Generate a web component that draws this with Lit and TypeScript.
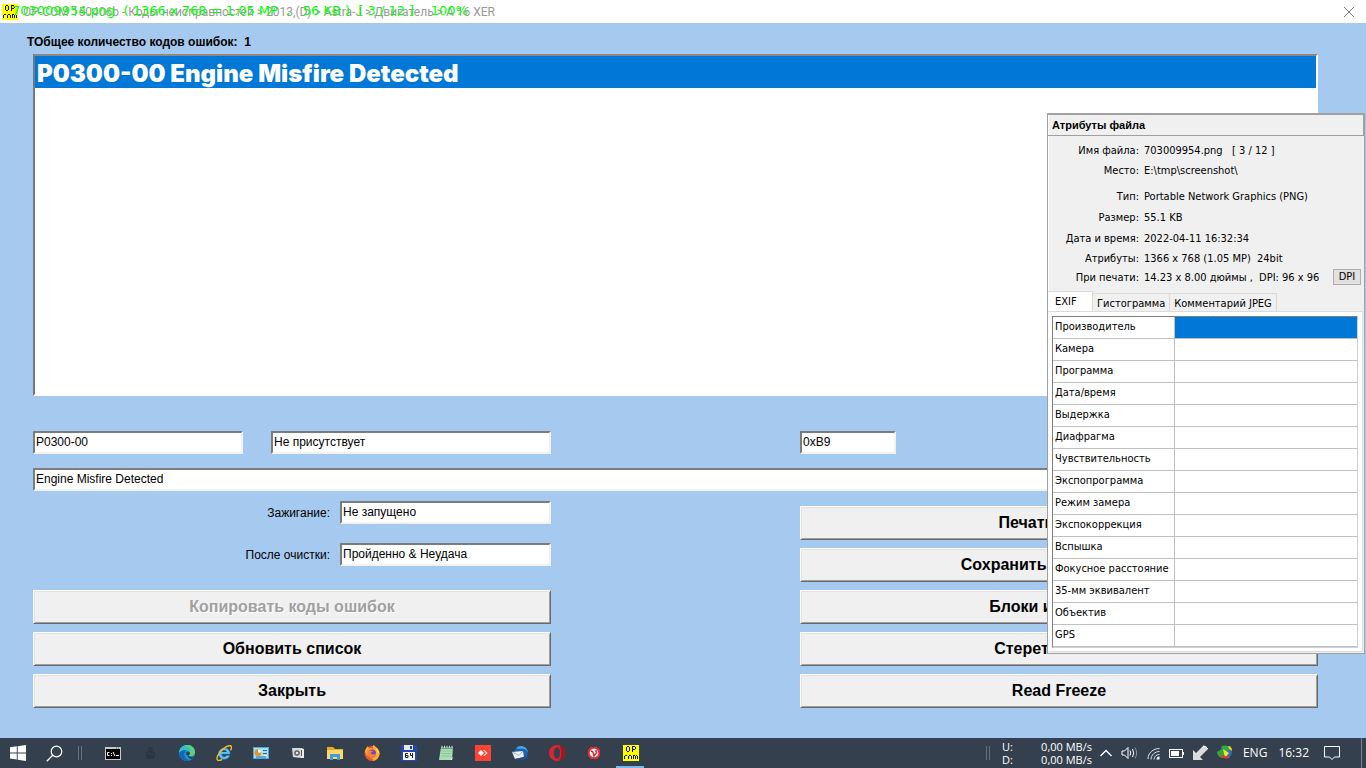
import { LitElement, html, svg, css } from "lit";
import { customElement } from "lit/decorators.js";

const EXIF_ROWS = [
  "Производитель", "Камера", "Программа", "Дата/время", "Выдержка", "Диафрагма",
  "Чувствительность", "Экспопрограмма", "Режим замера", "Экспокоррекция", "Вспышка",
  "Фокусное расстояние", "35-мм эквивалент", "Объектив", "GPS",
];

const INFO_GROUPS: { cls: string; rows: [string, string][] }[] = [
  { cls: "path", rows: [["Имя файла:", "703009954.png   [ 3 / 12 ]"], ["Место:", "E:\\tmp\\screenshot\\"]] },
  { cls: "kind", rows: [["Тип:", "Portable Network Graphics (PNG)"], ["Размер:", "55.1 KB"], ["Дата и время:", "2022-04-11 16:32:34"]] },
  { cls: "dims", rows: [["Атрибуты:", "1366 x 768 (1.05 MP)  24bit"], ["При печати:", "14.23 x 8.00 дюймы ,  DPI: 96 x 96"]] },
];

const opcom = svg`
  <rect width="16" height="16" fill="#ffff00"/>
  <g fill="none" stroke="#111" stroke-width="1">
    <path d="M3.500 2v4M6.500 2v4M4 1.500h2M4 6.500h2M9.500 1v6M10 1.500h2M12.500 2v2M10 4.500h2"/>
    <path d="M1.500 11v3M2 10.500h2M5.500 11v3M8.500 11v3M6 10.500h2M10.500 10v4M11 10.500h1M12.500 11v3M13 10.500h1M14.500 11v3"/>
  </g>`;

const APPS: { name: string; art: unknown; open?: boolean }[] = [
  { name: "Командная строка", art: svg`
    <rect x="0" y="2" width="16" height="13" fill="#c9c9c9"/><rect x="1" y="4" width="14" height="10" fill="#000"/>
    <path d="M11 3h1M13 3h1" stroke="#555"/>
    <path d="M4.500 7.500h-2v3h2M6.500 8v1M6.500 10v1M8 7l2 4M11 10.500h3" stroke="#fff" fill="none"/>` },
  { name: "Приложение", art: svg`
    <rect x="6" y="2" width="5" height="4" rx="2" fill="#2d3641"/><rect x="4" y="6" width="9" height="8" rx="3" fill="#2b343f"/><path d="M5 9h7" stroke="#38434f"/>` },
  { name: "Edge", art: svg`
    <circle cx="8" cy="8" r="8" fill="#1a8ed6"/>
    <path d="M0 8C0 3 4 0 8 0c5 0 8 3.500 8 7 0 2.500-2 4-4.500 4-2 0-2.500-1-2-2 .8-2-1-4-3.500-4C3 5 1 6.500 0 8z" fill="#35bfc0"/>
    <path d="M8 0c5 0 8 3.500 8 7 0 2.500-2 4-4.500 4-1.500 0-2.300-.6-2-1.500C13 7 12 2 5 .7 6 .2 7 0 8 0z" fill="#5fd07a"/>
    <path d="M5.500 8c-1 4 2 8 6.500 7C9 17 1 16 0 9c1-3 4-4.500 7-3.500C6 6 5.700 7 5.500 8z" fill="#1267b8"/>
    <circle cx="9" cy="8.500" r="2" fill="#34404e"/><path d="M9 10c1 2 4 2.500 6.300 1.200-.7 1.300-1.500 2.300-2.500 2.900C10 14 8.500 12 9 10z" fill="#34404e"/>` },
  { name: "Internet Explorer", art: svg`
    <path d="M14 9H5.500c.3 3.300 4 3.600 5 1.500h3.200C12 16 2.500 15.500 2.500 8.500c0-7 12-7.500 11.500.5z" fill="#5cc3f2" stroke="#2a8ccc" stroke-width=".5"/>
    <path d="M5.600 7h5.200c-.5-2.500-4.700-2.500-5.200 0z" fill="#34404e"/>
    <path d="M1.500 15C-1 12 7 2 13 .8c3-.5 3 2 1.500 4.500M1.500 15c1 1 3 .3 4.500-.7" fill="none" stroke="#f4b92a" stroke-width="1.400"/>` },
  { name: "Панель управления", art: svg`
    <rect x="0" y="2" width="16" height="12" fill="#4aa9dc"/><rect x="1" y="3" width="14" height="10" fill="#a6def5"/>
    <circle cx="5" cy="7.500" r="3" fill="#fff"/><path d="M5 7.500v-3.500a3.500 3.500 0 1 0 3.500 3.500z" fill="#e99324"/>
    <path d="M10 5.500h4M10 8.500h4M3 12h10" stroke="#1c6fae"/><path d="M11 10.500h3" stroke="#fff"/>` },
  { name: "Съёмка", art: svg`
    <path d="M2 3l9 0v10l-8-1z" fill="#d7d9da"/><path d="M11 3l3 1v9l-3 0z" fill="#eceded"/>
    <circle cx="7" cy="8" r="2.800" fill="#5b6165"/><circle cx="7" cy="8" r="1.300" fill="#e8e8e8"/><path d="M11.500 5v6" stroke="#555"/>` },
  { name: "Проводник", art: svg`
    <path d="M0 2h6l2 2h8v10H0z" fill="#e8ab25"/><path d="M0 5h16v9H0z" fill="#ffd76a"/><path d="M3 15V9h10v6h-3v-3H6v3z" fill="#3c9ee0"/>` },
  { name: "Firefox", art: svg`
    <circle cx="8" cy="8.500" r="7.500" fill="#f5542e"/><path d="M1 6C2 3 3 2 4 1l1 3c3-2 3 0 5 0C8 2 9 0 10 0c1 2 5 3 5.500 8 .3 4-3 8-7 8C12 13 3 14 1 6z" fill="#ffac2f"/>
    <circle cx="8" cy="8.500" r="4" fill="#7643c9"/><path d="M3.500 5c2 1 4-.5 5.500 1.500-1 .5-2 .5-2 1.500 1 2 3 2 5 .5 0 4-5 5-7.500 2.500C3 9.500 3 7 3.500 5z" fill="#ff8130"/><path d="M12 3c3 2 3.500 5 3 7-.5-2-1-2.500-2-3z" fill="#ffe14a"/>` },
  { name: "Total Commander", art: svg`
    <path d="M0 0h15l1 1v15H0z" fill="#2648ad"/><rect x="3" y="0" width="9" height="5" fill="#e5e9f2"/><rect x="9" y="1" width="2" height="3" fill="#24438f"/>
    <rect x="2" y="7" width="12" height="8" fill="#f5f5f5"/>
    <path d="M7 8.500H4.500v4H7v-2H5M9.500 8v2.500H12M11.500 8v5" fill="none" stroke="#222"/>` },
  { name: "Блокнот", art: svg`
    <path d="M3 2h12l-1 13H1z" fill="#a9dbb4"/><path d="M3 2h12v2H3z" fill="#6a9f78"/><path d="M3.500 6h10M3 8.500h10M3 11h10" stroke="#8fc79c"/><path d="M4 .8v2M6.500.8v2M9 .8v2M11.500.8v2M14 .8v2" stroke="#d8e6db"/><path d="M12 15l3-3-1 3z" fill="#f1fff2"/>` },
  { name: "AnyDesk", art: svg`
    <rect width="16" height="16" fill="#ff4236"/><path d="M3 8l3-3 3 3-3 3z" fill="#fff"/><path d="M8.500 5.500l1-.5 3 3-3 3-1-.5L11 8z" fill="#fff"/>` },
  { name: "Thunderbird", art: svg`
    <circle cx="9" cy="8" r="7" fill="#1c62b4"/><path d="M4 3C8-1 15 1 16 7c-2-3-5-4-9-3z" fill="#48a3e4"/>
    <path d="M0 7l11-1 1 6-9 2z" fill="#eff3f8"/><path d="M0 7l7 3.500 4-4.500" stroke="#9eb0c4" fill="none"/><path d="M3 14c4 2 9 1 11-4-2 2-5 3-11 4z" fill="#174a8c"/>` },
  { name: "Opera", art: svg`
    <circle cx="8" cy="8" r="8" fill="#e0222e"/><path d="M10 1c5 0 6 4 6 7s-1 7-6 7c3-3 3-11 0-14z" fill="#a5131c"/><ellipse cx="8" cy="8" rx="3.300" ry="5.800" fill="#34404e"/>` },
  { name: "Автоматизация", art: svg`
    <path d="M5 2h6l3 3v6l-3 3H5l-3-3V5z" fill="#e22f36"/><circle cx="8" cy="8" r="4.300" fill="#fff"/><path d="M5 6l2 1 1 4 3-4M9 6h2" stroke="#d52a31" stroke-width="1.500" fill="none"/>` },
  { name: "OP-COM", art: opcom, open: true },
];

@customElement("app-root")
export class AppRoot extends LitElement {
  static styles = css`
    :host { display: flex; flex-direction: column; height: 100vh; position: relative; overflow: hidden; background: #a6c9ef; color: #000; font: 12px/16px "Liberation Sans", Arial, sans-serif; }
    * { box-sizing: border-box; }
    button, input, select { font: inherit; color: inherit; margin: 0; border-radius: 0; }
    svg { display: block; flex: none; }

    .titlebar { flex: none; height: 23px; background: #fff; display: flex; align-items: center; justify-content: space-between; padding: 0 11px 0 2px; position: relative; }
    .caption { display: flex; align-items: center; gap: 5px; color: #999; font: 12px/16px Roboto, "Open Sans", sans-serif; white-space: pre; }
    .osd { position: absolute; left: 12px; top: 3px; color: #00ff00; font: 13px/16px "DejaVu Sans", sans-serif; white-space: pre; }
    .close { border: 0; padding: 0; background: none; width: 12px; height: 20px; }

    .main { flex: 1; min-height: 0; display: flex; flex-direction: column; padding: 11px 48px 30px 33px; }
    .count { font-weight: bold; margin-left: -6px; height: 20px; white-space: pre; }
    .codes { flex: 1; min-height: 60px; width: 100%; padding: 0; overflow: hidden; appearance: none; background: #fff; outline: 0; border: 2px solid; border-color: #8a8a8a #fff #fff #777; }
    .codes option { height: 32px; min-height: 32px; padding: 3px 2px 0; font: 900 24px/29px Inter, sans-serif; }
    .codes option:checked { color: #fff; background: #0078d7 linear-gradient(#0078d7, #0078d7); }
    .field { height: 23px; width: 100%; padding: 0 1px 2px; background: #fff; outline: 0; border: 2px solid; border-color: #7c7c7c #f4f2ef #f4f2ef #7c7c7c; }
    .split { display: grid; grid-template-columns: 1fr 1fr; column-gap: 249px; }
    .status { margin: 35px 0 14px; }
    .pair { display: grid; grid-template-columns: 3fr 4fr; column-gap: 28px; }
    .byte { width: 96px; }
    .below { margin-top: 10px; align-items: end; }
    .stack { display: flex; flex-direction: column; gap: 8px; }
    .states { display: flex; flex-direction: column; gap: 19px; margin-bottom: 24px; }
    .state { display: flex; justify-content: flex-end; align-items: center; gap: 10px; }
    .state .field { width: 211px; }
    .cmd { height: 34px; padding: 0; background: #f0f0f0; font: bold 16px/20px "Liberation Sans", Arial, sans-serif; border: 1px solid; border-color: #fff #696969 #696969 #fff; box-shadow: inset 1px 1px #e3e3e3, inset -1px -1px #a0a0a0; white-space: nowrap; overflow: hidden; }
    .cmd:disabled { color: #a0a0a0; text-shadow: 1px 1px #fff; }

    .panel { position: absolute; right: 1px; top: 113px; width: 318px; background: #f0f0f0; border: 1px solid #a0a0a0; box-shadow: inset 1px 0 #fff; padding-bottom: 1px; font: 11px/14px "DejaVu Sans Condensed", "Noto Sans", sans-serif; }
    .head { margin: 0; height: 22px; border: 1px solid #a0a0a0; border-width: 1px 1px 1px 0; padding: 3px 4px; font: bold 11px/14px "Liberation Sans", Arial, sans-serif; }
    .info { position: relative; padding-top: 5px; height: 155px; }
    .group { margin: 0; display: grid; grid-template-columns: 91px 1fr; column-gap: 5px; white-space: pre; }
    .group dt { text-align: right; }
    .group dd { margin: 0; }
    .path { line-height: 20px; margin-bottom: 5px; }
    .kind { line-height: 21px; }
    .dims { line-height: 19px; }
    .dpi { position: absolute; right: 3px; bottom: 6px; width: 28px; height: 16px; padding: 0; line-height: 12px; background: #e1e1e1; border: 1px solid #adadad; }
    .tabs { display: flex; align-items: flex-end; height: 20px; }
    .tab { border: 1px solid #d9d9d9; border-bottom: 0; border-left: 0; background: #f0f0f0; height: 18px; padding: 2px 4px 0; line-height: 15px; white-space: nowrap; }
    .tab.on { background: #fff; height: 20px; width: 45px; text-align: left; padding: 0 7px; }
    .page { background: #fff; border: 1px solid #dcdcdc; border-left: 0; margin-right: 1px; padding: 4px 4px 3px; }
    .exif { width: 100%; border-collapse: separate; border-spacing: 0; table-layout: fixed; border: 1px solid #808080; border-right-color: #d0d0d0; border-bottom-color: #d0d0d0; }
    .exif th { width: 122px; text-align: left; font-weight: normal; white-space: nowrap; }
    .exif th, .exif td { height: 22px; padding: 0 2px 2px; border: 1px solid #c0c0c0; border-width: 0 1px 1px 0; }
    .exif td { border-right: 0; }
    .exif .sel { background: #0078d7; }

    .taskbar { flex: none; height: 30px; background: #34404e; color: #fff; display: flex; align-items: stretch; font: 12px/14px "Open Sans", "Noto Sans", sans-serif; }
    .tb { flex: none; width: 37px; border: 0; padding: 0; background: none; display: flex; align-items: center; justify-content: center; }
    .sys { width: 36px; }
    .tb.open { box-shadow: inset 4px 0 #34404e, inset -5px 0 #34404e, inset 0 -2px #76b9ed; }
    .grip { flex: none; align-self: center; width: 4px; height: 14px; border: solid #66707b; border-width: 0 1px; }
    .grip.l { margin: 0 12px 0 6px; }
    .grip.r { margin-left: auto; margin-right: 12px; }
    .net { display: grid; grid-template-columns: 20px 70px; align-content: center; font-size: 11px; line-height: 13px; }
    .net span:nth-child(even) { text-align: right; }
    .tray { display: flex; align-items: center; gap: 8px; margin-left: 8px; }
    .lang, .clock { align-self: center; }
    .lang { margin-left: 10px; }
    .clock { margin-left: 11px; }
    .note { width: 38px; margin-left: 4px; }
    .desk { width: 5px; margin-left: 10px; border-left: 1px solid #7b858f; }
  `;

  private app(a: { name: string; art: unknown; open?: boolean }) {
    return html`<button class="tb ${a.open ? "open" : ""}" aria-label=${a.name}>
      <svg width="16" height="16" viewBox="0 0 16 16">${a.art}</svg></button>`;
  }

  render() {
    return html`
      <header class="titlebar">
        <div class="caption"><svg width="16" height="16" viewBox="0 0 16 16">${opcom}</svg><span>OP-COM 150406b - Коды неисправностей > 2013,(D) > Astra-J > Двигатель > A 16 XER</span></div>
        <div class="osd">703009954.png  ( 1366 x 768 = 1.05 MP  ,   56 KB )  [ 3 / 12 ]    100%</div>
        <button class="close" aria-label="Закрыть окно"><svg width="12" height="12" viewBox="0 0 12 12"><path d="M1 1l10 10M11 1L1 11" stroke="#777"/></svg></button>
      </header>

      <main class="main">
        <label class="count" for="codes">ТОбщее количество кодов ошибок:  1</label>
        <select class="codes" id="codes" size="2"><option selected>P0300-00 Engine Misfire Detected</option></select>

        <div class="split status">
          <div class="pair">
            <input class="field" aria-label="Код" value="P0300-00" />
            <input class="field" aria-label="Состояние" value="Не присутствует" />
          </div>
          <input class="field byte" aria-label="Байт состояния" value="0xB9" />
        </div>
        <input class="field" aria-label="Описание" value="Engine Misfire Detected" />

        <div class="split below">
          <div>
            <div class="states">
              <div class="state"><label for="ign">Зажигание:</label><input class="field" id="ign" value="Не запущено" /></div>
              <div class="state"><label for="clr">После очистки:</label><input class="field" id="clr" value="Пройденно &amp; Неудача" /></div>
            </div>
            <div class="stack">
              <button class="cmd" disabled>Копировать коды ошибок</button>
              <button class="cmd">Обновить список</button>
              <button class="cmd">Закрыть</button>
            </div>
          </div>
          <div class="stack">
            <button class="cmd">Печать ошибок</button>
            <button class="cmd">Сохранить коды ошибок</button>
            <button class="cmd">Блоки измерений</button>
            <button class="cmd">Стереть ошибки</button>
            <button class="cmd">Read Freeze</button>
          </div>
        </div>
      </main>

      <aside class="panel">
        <h2 class="head">Атрибуты файла</h2>
        <div class="info">
          ${INFO_GROUPS.map((g) => html`<dl class="group ${g.cls}">${g.rows.map(([k, v]) => html`<dt>${k}</dt><dd>${v}</dd>`)}</dl>`)}
          <button class="dpi">DPI</button>
        </div>
        <div class="tabs" role="tablist">
          <button class="tab on" role="tab" aria-selected="true">EXIF</button>
          <button class="tab" role="tab">Гистограмма</button>
          <button class="tab" role="tab">Комментарий JPEG</button>
        </div>
        <div class="page">
          <table class="exif"><tbody>
            ${EXIF_ROWS.map((r, i) => html`<tr><th scope="row">${r}</th><td class=${i === 0 ? "sel" : ""}></td></tr>`)}
          </tbody></table>
        </div>
      </aside>

      <footer class="taskbar">
        <button class="tb sys" aria-label="Пуск"><svg width="16" height="16" viewBox="0 0 16 16"><path d="M0 2.300L6.800 1.300V7.500H0zM7.700 1.200L16 0v7.500H7.700zM0 8.400h6.800v6.200L0 13.600zM7.700 8.400H16V16l-8.300-1.200z" fill="#fff"/></svg></button>
        <button class="tb sys" aria-label="Поиск"><svg width="17" height="17" viewBox="0 0 17 17"><circle cx="10.500" cy="6.500" r="5.300" fill="none" stroke="#fff" stroke-width="1.200"/><path d="M6.700 10.300L.8 16.200" stroke="#fff" stroke-width="1.300"/></svg></button>
        <span class="grip l"></span>
        ${APPS.map((a) => this.app(a))}
        <span class="grip r"></span>
        <div class="net"><span>U:</span><span>0,00 MB/s</span><span>D:</span><span>0,00 MB/s</span></div>
        <div class="tray">
          <svg width="12" height="16" viewBox="0 0 12 16"><path d="M.5 11L6 5.500 11.500 11" fill="none" stroke="#fff" stroke-width="1.300"/></svg>
          <svg width="19" height="16" viewBox="0 0 19 16"><path d="M2 6h2.500L8 2.500v11L4.500 10H2z" fill="none" stroke="#fff"/><path d="M10 5.500q1.500 2.500 0 5M12.500 4q2.500 4 0 8" fill="none" stroke="#fff"/><path d="M15 2.500q3.300 5.500 0 11" fill="none" stroke="#8c949c"/></svg>
          <svg width="14" height="16" viewBox="0 0 14 16"><g fill="none" stroke="#dfe2e5"><path d="M1 14C1 8 6 3.500 12.500 3.500M4 14.500C4 10 8 6.500 12.500 6.500M7 14.500c0-3 2.500-5 5.500-5"/></g><path d="M9.500 14.500a3 3 0 0 1 3-3v3z" fill="#fff"/></svg>
          <svg width="16" height="16" viewBox="0 0 16 16"><rect x=".5" y="4.500" width="13" height="8" fill="none" stroke="#fff"/><rect x="2" y="6" width="8" height="5" fill="#fff"/><path d="M14.500 7v3" stroke="#fff"/></svg>
          <svg width="16" height="16" viewBox="0 0 16 16"><path d="M0 15V5l3 3 7-7q3-1 5 3l-8 8 3 3z" fill="#dcdcdc"/><path d="M10 1q3 0 5 3" stroke="#fff" fill="none"/></svg>
          <svg width="16" height="16" viewBox="0 0 16 16"><circle cx="9" cy="7" r="6" fill="#2471c5"/><path d="M4 2c4-3 8-1 9 2l-5 4z" fill="#2fae3b"/><path d="M0 7l5-3 3 4-2 5C3 13 0 10 0 7z" fill="#38a23c"/><path d="M6 4l6 4-4 5z" fill="#ffe22e"/><path d="M3 10c2 3 7 5 10 2l-4-1z" fill="#e53b27"/><path d="M11 1c3 0 4 2 4 5l-3-2z" fill="#f5c51c"/></svg>
        </div>
        <span class="lang">ENG</span>
        <span class="clock">16:32</span>
        <button class="tb note" aria-label="Уведомления"><svg width="16" height="16" viewBox="0 0 16 16"><path d="M.5 1.500h15v10.500H10.500L8 14.500 5.500 12H.5z" fill="none" stroke="#fff"/></svg></button>
        <span class="desk"></span>
      </footer>`;
  }
}
